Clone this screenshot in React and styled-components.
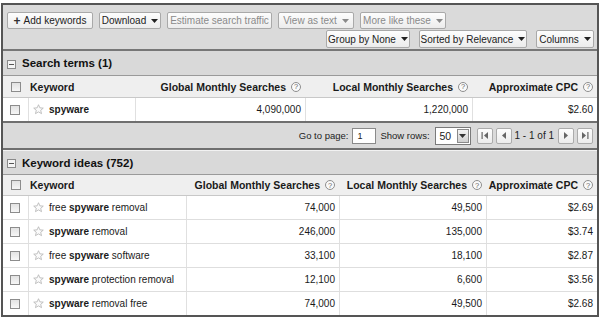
import styled, { createGlobalStyle } from 'styled-components';

const GlobalStyle = createGlobalStyle`
  body {
    margin: 0;
    background: #fff;
    font-family: "Liberation Sans", Arial, sans-serif;
    color: #222;
  }
`;

const searchTerms = [{ pre: '', bold: 'spyware', post: '', global: '4,090,000', local: '1,220,000', cpc: '$2.60' }];

const ideas = [
  { pre: 'free ', bold: 'spyware', post: ' removal', global: '74,000', local: '49,500', cpc: '$2.69' },
  { pre: '', bold: 'spyware', post: ' removal', global: '246,000', local: '135,000', cpc: '$3.74' },
  { pre: 'free ', bold: 'spyware', post: ' software', global: '33,100', local: '18,100', cpc: '$2.87' },
  { pre: '', bold: 'spyware', post: ' protection removal', global: '12,100', local: '6,600', cpc: '$3.56' },
  { pre: '', bold: 'spyware', post: ' removal free', global: '74,000', local: '49,500', cpc: '$2.68' },
];

const Arrow = () => (
  <svg width="7" height="4" viewBox="0 0 7 4">
    <path d="M0 0h7L3.5 4z" fill="currentColor" />
  </svg>
);

const Star = () => (
  <svg width="11" height="11" viewBox="0 0 12 12">
    <path
      d="M6 .8l1.5 3.4 3.7.3-2.8 2.4.9 3.6L6 8.6 2.7 10.5l.9-3.6L.8 4.5l3.7-.3z"
      fill="#fbfbfb"
      stroke="#b5b5b5"
      strokeWidth="0.9"
      strokeLinejoin="round"
    />
  </svg>
);

const NavIcon = ({ dir, edge }) => (
  <svg width="8" height="7" viewBox="0 0 8 7">
    {dir === 'left' ? (
      <>
        {edge && <rect x="0.5" y="0" width="1.2" height="7" fill="#666" />}
        <path d={edge ? 'M7 0v7L3 3.5z' : 'M6 0v7L2 3.5z'} fill="#666" />
      </>
    ) : (
      <>
        <path d={edge ? 'M1 0v7l4-3.5z' : 'M2 0v7l4-3.5z'} fill="#666" />
        {edge && <rect x="6.3" y="0" width="1.2" height="7" fill="#666" />}
      </>
    )}
  </svg>
);

const Frame = styled.div`
  margin: 3px 1px 0;
  border: 2px solid #555;
  width: 594px;
`;

const Toolbar = styled.div`
  background: #dadada;
  height: 46px;
  box-sizing: border-box;
  padding: 7px 3px 0 4px;
  border-bottom: 2px solid #777;
`;

const ToolRow = styled.div`
  display: flex;
  justify-content: ${p => (p.$right ? 'flex-end' : 'flex-start')};
  gap: ${p => p.$gap}px;
  margin-bottom: 1px;
`;

const Btn = styled.div`
  display: flex;
  align-items: center;
  justify-content: center;
  gap: 5px;
  width: ${p => p.$w}px;
  height: ${p => p.$h || 17}px;
  box-sizing: border-box;
  border: 1px solid #a9a9a9;
  border-radius: 2px;
  background: linear-gradient(#fdfdfd, #ececec);
  font-size: 10px;
  color: ${p => (p.$off ? '#8a8a8a' : '#222')};
  white-space: nowrap;
`;

const Plus = styled.span`
  font-weight: bold;
  font-size: 12px;
  line-height: 1;
  color: #333;
  margin-right: -2px;
`;

const SectionHead = styled.div`
  display: flex;
  align-items: center;
  gap: 6px;
  height: ${p => p.$h}px;
  padding-left: 4px;
  background: #d9d9d9;
  border-top: ${p => (p.$top ? '1px solid #f2f2f2' : 'none')};
  border-bottom: 1px solid #9a9a9a;
  font-size: 11.5px;
  font-weight: bold;
  color: #111;
`;

const Collapse = styled.span`
  position: relative;
  width: 9px;
  height: 9px;
  box-sizing: border-box;
  border: 1px solid #8a8a8a;
  background: #f4f4f4;
  margin-top: 2px;
  &::after {
    content: '';
    position: absolute;
    left: 1px;
    right: 1px;
    top: 3px;
    height: 1px;
    background: #555;
  }
`;

const Row = styled.div`
  display: grid;
  grid-template-columns: ${p => p.$cols};
  height: ${p => p.$h}px;
  background: ${p => (p.$head ? '#efefef' : '#fff')};
  border-bottom: ${p => (p.$last ? 'none' : `1px solid ${p.$head ? '#c8c8c8' : '#dedede'}`)};
  font-size: ${p => (p.$head ? '10.5px' : '10px')};
  font-weight: ${p => (p.$head ? 'bold' : 'normal')};
  color: #1a1a1a;
`;

const Cell = styled.div`
  display: flex;
  align-items: center;
  justify-content: ${p => (p.$num ? 'flex-end' : 'flex-start')};
  gap: 5px;
  padding: ${p => (p.$num ? '0 4px 0 0' : `0 0 0 ${p.$pl || 0}px`)};
  border-left: ${p => (p.$sep ? '1px solid #e0e0e0' : 'none')};
  white-space: nowrap;
  overflow: hidden;
`;

const Check = styled.span`
  width: 10px;
  height: 10px;
  box-sizing: border-box;
  border: 1px solid #8c8c8c;
  background: linear-gradient(#e2e2e2, #f6f6f6);
`;

const Help = styled.span`
  display: inline-flex;
  align-items: center;
  justify-content: center;
  width: 10px;
  height: 10px;
  box-sizing: border-box;
  border: 1px solid #8e8e8e;
  border-radius: 50%;
  font-size: 7.5px;
  font-weight: normal;
  color: #666;
  background: #fafafa;
`;

const Pager = styled.div`
  display: flex;
  align-items: center;
  justify-content: flex-end;
  height: 25px;
  padding-right: 4px;
  background: #dadada;
  border-top: 2px solid #6f6f6f;
  border-bottom: 2px solid #6f6f6f;
  font-size: 9.5px;
  color: #222;
`;

const PageInput = styled.span`
  display: flex;
  align-items: center;
  width: 24px;
  height: 16px;
  box-sizing: border-box;
  margin: 0 4px 0 4px;
  padding-left: 4px;
  border: 1px solid #8a8a8a;
  background: #fff;
  font-size: 9px;
`;

const Select = styled.span`
  display: flex;
  align-items: center;
  justify-content: space-between;
  width: 36px;
  height: 18px;
  box-sizing: border-box;
  margin: 0 6px 0 5px;
  padding: 1px 1px 1px 4px;
  border: 1px solid #7a7a7a;
  background: #fff;
  font-size: 10.5px;
`;

const SelectArrow = styled.span`
  display: flex;
  align-items: center;
  justify-content: center;
  width: 12px;
  height: 14px;
  box-sizing: border-box;
  border: 1px solid #8a8a8a;
  background: linear-gradient(#f4f4f4, #cfcfcf);
  color: #333;
`;

const NavBtn = styled.span`
  display: flex;
  align-items: center;
  justify-content: center;
  width: 16px;
  height: 16px;
  box-sizing: border-box;
  margin-left: ${p => p.$ml}px;
  border: 1px solid #ababab;
  border-radius: 2px;
  background: linear-gradient(#fdfdfd, #ececec);
`;

const Range = styled.span`
  margin: 0 4px 0 3px;
  font-size: 10px;
`;

const Keyword = ({ item }) => (
  <span>
    {item.pre}
    <b>{item.bold}</b>
    {item.post}
  </span>
);

const Table = ({ cols, rows }) => (
  <>
    <Row $head $cols={cols} $h={rows.length > 1 ? 20 : 21}>
      <Cell $pl={8}><Check /></Cell>
      <Cell $pl={2}>Keyword</Cell>
      <Cell $num>Global Monthly Searches <Help>?</Help></Cell>
      <Cell $num>Local Monthly Searches <Help>?</Help></Cell>
      <Cell $num>Approximate CPC <Help>?</Help></Cell>
    </Row>
    {rows.map((r, i) => (
      <Row key={i} $cols={cols} $h={23} $last={i === rows.length - 1}>
        <Cell $pl={7}><Check /></Cell>
        <Cell $sep $pl={4}><Star /><Keyword item={r} /></Cell>
        <Cell $sep $num>{r.global}</Cell>
        <Cell $sep $num>{r.local}</Cell>
        <Cell $sep $num>{r.cpc}</Cell>
      </Row>
    ))}
  </>
);

export default function App() {
  return (
    <>
      <GlobalStyle />
      <Frame>
        <Toolbar>
          <ToolRow $gap={6}>
            <Btn $w={86}><Plus>+</Plus>Add keywords</Btn>
            <Btn $w={62}>Download <Arrow /></Btn>
            <Btn $w={105} $off>Estimate search traffic</Btn>
            <Btn $w={76} $off>View as text <Arrow /></Btn>
            <Btn $w={86} $off>More like these <Arrow /></Btn>
          </ToolRow>
          <ToolRow $right $gap={9}>
            <Btn $w={84} $h={18}>Group by None <Arrow /></Btn>
            <Btn $w={108} $h={18}>Sorted by Relevance <Arrow /></Btn>
            <Btn $w={58} $h={18}>Columns <Arrow /></Btn>
          </ToolRow>
        </Toolbar>

        <SectionHead $h={24}><Collapse />Search terms (1)</SectionHead>
        <Table cols="25px 107px 170px 167px 1fr" rows={searchTerms} />

        <Pager>
          Go to page:
          <PageInput>1</PageInput>
          Show rows:
          <Select>50<SelectArrow><Arrow /></SelectArrow></Select>
          <NavBtn $ml={0}><NavIcon dir="left" edge /></NavBtn>
          <NavBtn $ml={3}><NavIcon dir="left" /></NavBtn>
          <Range>1 - 1 of 1</Range>
          <NavBtn $ml={0}><NavIcon dir="right" /></NavBtn>
          <NavBtn $ml={3}><NavIcon dir="right" edge /></NavBtn>
        </Pager>

        <SectionHead $h={23} $top><Collapse />Keyword ideas (752)</SectionHead>
        <Table cols="25px 158px 153px 147px 1fr" rows={ideas} />
      </Frame>
    </>
  );
}
